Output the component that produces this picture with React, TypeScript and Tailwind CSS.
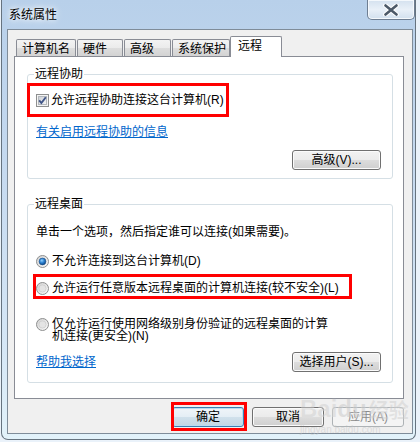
import React from 'react';

const font = "font-['Liberation_Sans','Noto_Sans_CJK_SC',sans-serif]";

const tabs = [
    { label: '计算机名', width: 'w-[60px]' },
    { label: '硬件', width: 'w-[46px]' },
    { label: '高级', width: 'w-[47px]' },
    { label: '系统保护', width: 'w-[58px]' },
];

const CheckBox = () => (
    <svg width="13" height="13" viewBox="0 0 13 13" className="shrink-0">
        <defs>
            <linearGradient id="cb-in" x1="0" y1="0" x2="1" y2="1">
                <stop offset="0" stopColor="#cbcfd5" />
                <stop offset="1" stopColor="#f6f6f6" />
            </linearGradient>
        </defs>
        <rect x="0.5" y="0.5" width="12" height="12" fill="#f4f4f4" stroke="#8e8f8f" />
        <rect x="2.5" y="2.5" width="8" height="8" fill="url(#cb-in)" stroke="#b4b8bd" />
        <path d="M3.2 6.3 L5.4 9 L9.8 3.2" stroke="#3f5487" strokeWidth="1.9" fill="none" />
    </svg>
);

const RadioIcon = ({ checked = false }: { checked?: boolean }) => (
    <svg width="13" height="13" viewBox="0 0 13 13" className="shrink-0">
        <defs>
            <linearGradient id="rd-out" x1="0" y1="0" x2="1" y2="1">
                <stop offset="0" stopColor="#d0d0d0" />
                <stop offset="1" stopColor="#fbfbfb" />
            </linearGradient>
            <radialGradient id="rd-dot" cx="0.4" cy="0.35" r="0.7">
                <stop offset="0" stopColor="#8fd0ff" />
                <stop offset="0.5" stopColor="#2a7fcf" />
                <stop offset="1" stopColor="#0b3f7c" />
            </radialGradient>
        </defs>
        <circle cx="6.5" cy="6.5" r="6" fill="url(#rd-out)" stroke="#8e8f8f" />
        {checked ? (
            <circle cx="6.5" cy="6.5" r="3.4" fill="url(#rd-dot)" stroke="#1a4f8a" strokeWidth="0.6" />
        ) : (
            <circle cx="6.5" cy="6.5" r="3.6" fill="#e4e4e4" stroke="#c6c6c6" strokeWidth="0.6" />
        )}
    </svg>
);

const Button = ({
    children,
    width,
    primary = false,
    disabled = false,
}: {
    children: React.ReactNode;
    width: string;
    primary?: boolean;
    disabled?: boolean;
}) => {
    let look =
        'border-[#707070] text-black bg-[linear-gradient(to_bottom,#f2f2f2_0%,#ebebeb_50%,#dddddd_50%,#cfcfcf_100%)] shadow-[inset_0_0_0_1px_#fbfbfb]';
    if (primary)
        look =
            'border-[#3c7fb1] text-black bg-[linear-gradient(to_bottom,#f0f5f9_0%,#e4eef5_50%,#d1e1ec_50%,#c3d6e3_100%)] shadow-[inset_0_0_0_1px_#b9dcf2]';
    if (disabled) look = 'border-[#adb2b5] text-[#8a8a8a] bg-[#f4f4f4]';
    return (
        <div
            className={`${width} ${look} flex h-[20px] shrink-0 items-center justify-center rounded-[3px] border text-[12px] leading-[12px]`}
        >
            {children}
        </div>
    );
};

const CloseGlyph = () => (
    <svg width="16" height="12" viewBox="0 0 16 12">
        <path d="M2.5 1.5 L13.5 10.5 M13.5 1.5 L2.5 10.5" stroke="#ffffff" strokeWidth="4.6" strokeLinecap="round" />
        <path d="M2.5 1.5 L13.5 10.5 M13.5 1.5 L2.5 10.5" stroke="#4c5968" strokeWidth="2.6" strokeLinecap="round" />
    </svg>
);

const SystemProperties = () => (
    <div className={`${font} relative h-[442px] w-[420px] overflow-hidden bg-[#eaf2fa] text-[12px] leading-[12px] text-black`}>
        <div className="ml-[1px] flex h-[440px] w-[415px] flex-col rounded-b-[7px] border-x border-b border-[#66737f] bg-[linear-gradient(to_bottom,#b8d0ea_0%,#c6daf0_40%,#d6e7f6_80%,#e2f2fa_100%)]">
            {/* title bar */}
            <div className="flex h-[29px] shrink-0 items-start justify-between">
                <span className="ml-[7px] mt-[8px] text-[12px] leading-[14px] [text-shadow:0_0_5px_#ffffff,0_0_8px_#ffffff]">
                    系统属性
                </span>
                <div className="flex h-[20px] w-[48px] items-center justify-center rounded-b-[5px] border-x border-b border-[#6e7e92] bg-[linear-gradient(to_bottom,#d4e1ef_0%,#e9f0f8_50%,#d2e0ee_100%)] shadow-[inset_0_0_0_1px_#f4f8fc]">
                    <CloseGlyph />
                </div>
            </div>

            {/* client area */}
            <div className="ml-[5px] flex h-[405px] w-[406px] flex-col border border-[#7f8c99] bg-[#f0f0f0] pl-[6px] pr-[8px] pt-[6px]">
                {/* tabs */}
                <div className="flex h-[20px] items-end gap-[1px] pl-[2px]">
                    {tabs.map((tab) => (
                        <div
                            key={tab.label}
                            className={`${tab.width} flex h-[17px] items-center rounded-t-[2px] border-x border-t border-[#898c95] bg-[linear-gradient(to_bottom,#f3f3f3_0%,#ebebeb_50%,#dddddd_51%,#d3d3d3_100%)] pl-[5px] pt-[1px]`}
                        >
                            {tab.label}
                        </div>
                    ))}
                    <div className="relative z-10 -mb-px ml-[-1px] flex h-[21px] w-[52px] items-center rounded-t-[2px] border-x border-t border-[#898c95] bg-white pb-[2px] pl-[7px]">
                        远程
                    </div>
                </div>

                {/* panel */}
                <div className="h-[343px] w-[390px] border border-[#898c95] bg-white pt-[11px]">
                    <fieldset className="ml-[12px] w-[366px] rounded-[3px] border border-[#d5dfe5] px-0 pb-[8px]">
                        <legend className="ml-[6px] px-[1px] leading-[12px]">远程协助</legend>
                        <div className="pl-[8px] pr-[11px]">
                            <div className="mt-[13px] flex h-[14px] items-center gap-[2px]">
                                <CheckBox />
                                <span>允许远程协助连接这台计算机(R)</span>
                            </div>
                            <div className="mt-[18px] h-[14px] leading-[14px] text-[#0066cc] underline">
                                有关启用远程协助的信息
                            </div>
                            <div className="mt-[11px] flex justify-end">
                                <Button width="w-[89px]">高级(V)...</Button>
                            </div>
                        </div>
                    </fieldset>

                    <fieldset className="ml-[12px] mt-[19px] w-[366px] rounded-[3px] border border-[#d5dfe5] px-0 pb-[10px]">
                        <legend className="ml-[6px] px-[1px] leading-[12px]">远程桌面</legend>
                        <div className="pl-[8px] pr-[11px]">
                            <div className="mt-[15px] h-[14px] leading-[14px]">
                                单击一个选项，然后指定谁可以连接(如果需要)。
                            </div>
                            <div className="mt-[15px] flex h-[14px] items-center gap-[3px]">
                                <RadioIcon checked />
                                <span>不允许连接到这台计算机(D)</span>
                            </div>
                            <div className="mt-[13px] flex h-[14px] items-center gap-[3px]">
                                <RadioIcon />
                                <span>允许运行任意版本远程桌面的计算机连接(较不安全)(L)</span>
                            </div>
                            <div className="mt-[23px] flex items-start gap-[3px]">
                                <RadioIcon />
                                <span className="leading-[12px]">
                                    仅允许运行使用网络级别身份验证的远程桌面的计算
                                    <br />
                                    机连接(更安全)(N)
                                </span>
                            </div>
                            <div className="mt-[10px] flex h-[20px] items-center justify-between">
                                <span className="text-[#0066cc] underline">帮助我选择</span>
                                <Button width="w-[89px]">选择用户(S)...</Button>
                            </div>
                        </div>
                    </fieldset>
                </div>

                {/* dialog buttons */}
                <div className="mt-[8px] flex justify-end gap-[8px]">
                    <Button width="w-[72px]" primary>
                        确定
                    </Button>
                    <Button width="w-[72px]">取消</Button>
                    <Button width="w-[72px]" disabled>
                        应用(A)
                    </Button>
                </div>
            </div>
        </div>

        {/* watermark */}
        <div className="pointer-events-none absolute left-[300px] top-[397px] flex flex-col opacity-50">
            <div className="flex items-end font-['Liberation_Sans',sans-serif] text-[24px] font-bold leading-[24px] text-[#d0d0d0] [text-shadow:0_0_1px_#ffffff]">
                Bai<span className="text-[#c8c8c8]">du</span>
                <span className="ml-[2px] font-['Noto_Sans_CJK_SC',sans-serif] text-[20px] leading-[22px]">经验</span>
            </div>
            <div className="mt-[4px] text-[10px] leading-[10px] text-[#c8c8c8]">jingyan.baidu.com</div>
        </div>

        {/* red annotation boxes */}
        <div className="pointer-events-none absolute left-[27px] top-[83px] h-[34px] w-[202px] border-[3px] border-[#ff0000]" />
        <div className="pointer-events-none absolute left-[33px] top-[274px] h-[25px] w-[319px] border-[3px] border-[#ff0000]" />
        <div className="pointer-events-none absolute left-[171px] top-[402px] h-[29px] w-[76px] border-[3px] border-[#ff0000]" />
    </div>
);

export default SystemProperties;
